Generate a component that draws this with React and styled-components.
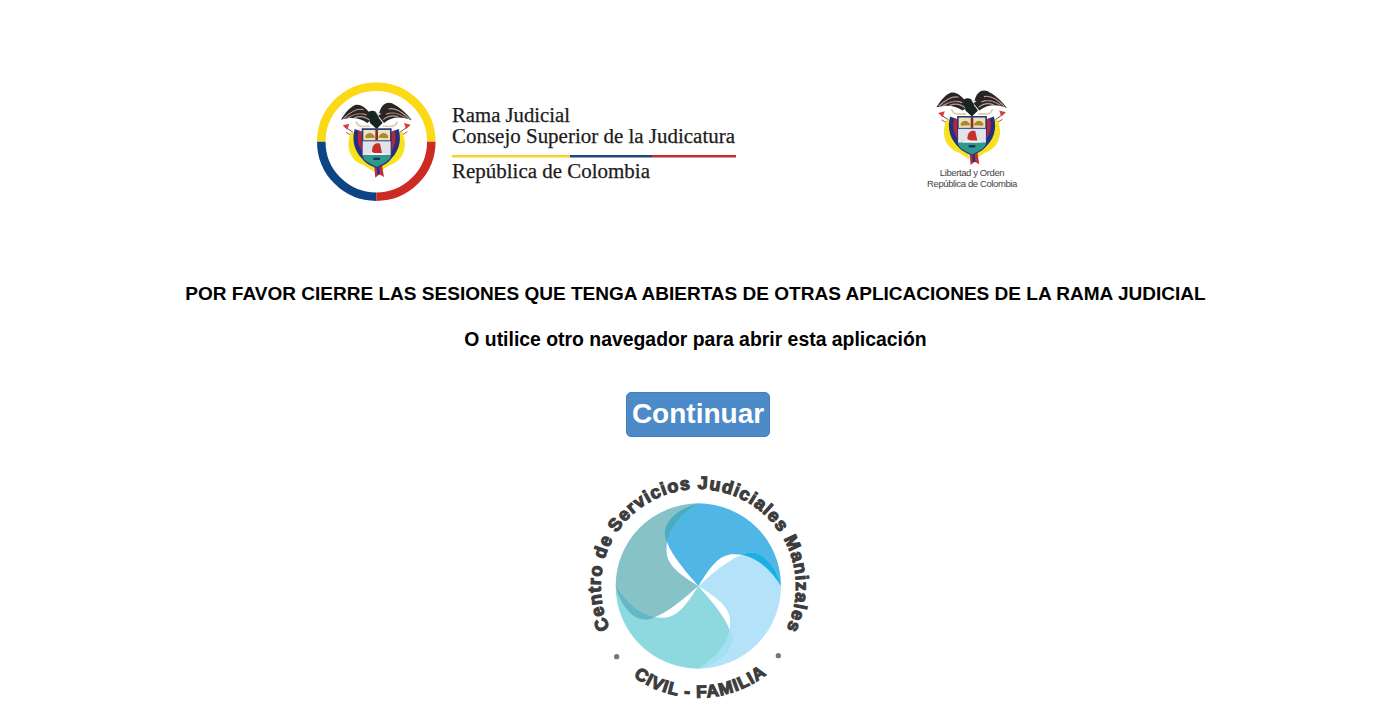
import styled, { createGlobalStyle } from "styled-components"

const colors = {
  yellow: "#fbd915",
  blue: "#0d4485",
  red: "#cc2a22",
  ink: "#3d3d3d",
}

const GlobalStyle = createGlobalStyle`
  html, body {
    margin: 0;
    padding: 0;
    background: #fff;
    font-family: "Liberation Sans", Arial, sans-serif;
  }
`

const Page = styled.div`
  display: flex;
  flex-direction: column;
  align-items: center;
  height: 722px;
  overflow: hidden;
  padding: 80px 0 0 8px;
  box-sizing: border-box;
`

const LogoRow = styled.div`
  align-self: flex-start;
  display: flex;
  align-items: flex-start;
  gap: 190px;
  padding-left: 309px;
`

const RamaLogo = styled.svg`
  display: block;
  width: 420px;
  height: 124px;
`

const RamaText = styled.text`
  font-family: "Liberation Serif", "Times New Roman", serif;
  font-size: 20.5px;
  fill: #1c1c1c;
  stroke: #1c1c1c;
  stroke-width: 0.25px;
`

const SealBlock = styled.div`
  display: flex;
  flex-direction: column;
  align-items: center;
  width: 90px;
  padding-top: 9px;
`

const SealImage = styled.svg`
  display: block;
  width: 74px;
  height: 78px;
`

const SealCaption = styled.div`
  font-size: 9.5px;
  line-height: 11px;
  letter-spacing: -0.4px;
  color: #444;
  text-align: center;
  white-space: nowrap;
`

const Notice = styled.h3`
  margin: ${(p) => p.$top}px 0 0;
  font-size: ${(p) => p.$size}px;
  line-height: 20px;
  font-weight: bold;
  color: #000;
  text-align: center;
  white-space: nowrap;
`

const ContinueButton = styled.button`
  margin: 43px 0 0 5px;
  width: 144px;
  height: 45px;
  padding: 0 0 2px;
  border: 1px solid #3f80bd;
  border-radius: 5px;
  background: #4c8bc8;
  color: #fff;
  font-family: inherit;
  font-size: 28px;
  font-weight: bold;
  cursor: pointer;
`

const CentroLogo = styled.svg`
  display: block;
  flex: none;
  margin: 28px 0 0 -1px;
  width: 240px;
  height: 245px;
`

const CircleText = styled.text`
  font-family: "Liberation Sans", Arial, sans-serif;
  font-weight: bold;
  font-size: ${(p) => p.$size}px;
  fill: ${colors.ink};
  stroke: ${colors.ink};
  stroke-width: 3.5px;
`

// viewBox is 90..310 x 85..320, drawn a bit by eye from the crest
const Crest = () => (
  <g>
    {/* spears */}
    <path d="M102,160 L155,195 M298,158 L245,195" stroke="#5a5a5a" strokeWidth="3" fill="none" />
    <path d="M98,157 L118,152 L112,170Z M302,155 L282,150 L288,168Z" fill="#d8413a" />
    <path d="M108,178 L140,196 M292,176 L260,196" stroke="#d8413a" strokeWidth="3" />

    {/* flags and their yellow tails */}
    <path d="M124,176 C106,214 116,262 160,276 C172,282 182,292 192,296 L186,262 L158,180Z" fill="#f6e21f" />
    <path d="M276,176 C294,214 284,262 240,276 C228,282 218,292 208,296 L214,262 L242,180Z" fill="#f6e21f" />
    <path d="M134,168 C124,206 134,240 166,266 L176,244 L156,176Z" fill="#22307f" />
    <path d="M266,168 C276,206 266,240 234,266 L224,244 L244,176Z" fill="#22307f" />
    <path d="M146,172 C138,205 148,232 172,252 L172,225 L156,178Z" fill="#b3263d" />
    <path d="M254,172 C262,205 252,232 228,252 L228,225 L244,178Z" fill="#b3263d" />

    {/* ribbon under the shield */}
    <path d="M192,278 L216,276 L222,312 L208,304 L196,314Z" fill="#c32f35" />
    <path d="M200,280 L208,280 L210,304 L202,306Z" fill="#26357f" />

    {/* wings */}
    <path d="M190,136 C176,110 152,90 134,97 C118,104 104,122 93,140 C124,131 150,135 172,150Z" fill="#2a2424" />
    <path d="M206,130 C210,98 226,84 246,91 C266,101 292,122 305,142 C276,130 246,130 222,150Z" fill="#2a2424" />
    <path d="M100,137 C120,118 140,104 160,110 M112,136 C130,124 150,118 170,126 M132,135 C148,128 165,130 180,142" stroke="#b6a39b" strokeWidth="3.5" fill="none" />
    <path d="M298,138 C278,118 258,102 236,108 M286,134 C268,122 246,116 228,124 M266,133 C250,126 234,128 220,140" stroke="#b6a39b" strokeWidth="3.5" fill="none" />
    <path d="M108,134 C126,126 142,120 156,122 M290,134 C272,124 256,120 242,120" stroke="#8a3f3f" strokeWidth="2" fill="none" />

    {/* body */}
    <path d="M176,116 C192,108 206,118 206,134 L218,150 L200,168 L180,150Z" fill="#17241f" />
    <path d="M196,116 L214,122 L204,128Z" fill="#d9e2e0" />

    {/* laurel */}
    <path d="M138,146 C146,168 168,158 182,160 M262,146 C254,168 232,158 218,160" stroke="#d9ceaa" strokeWidth="5" fill="none" />

    {/* shield */}
    <path d="M155,166 L245,166 L245,245 C245,268 220,276 200,286 C180,276 155,268 155,245Z" fill="#2b3a7c" />
    <rect x="160" y="171" width="80" height="31" fill="#efe3b8" />
    <path d="M166,188 C174,176 190,178 195,194 L166,196Z M234,188 C226,176 210,178 205,194 L234,196Z" fill="#a68a36" />
    <rect x="196" y="170" width="8" height="32" fill="#8a2c2c" />
    <rect x="158" y="205" width="84" height="42" fill="#dfe4ea" />
    <path d="M186,236 C186,214 198,208 210,212 L216,240 L200,244Z" fill="#c8302c" />
    <path d="M158,247 L242,247 C242,264 218,272 200,282 C182,272 158,264 158,247Z" fill="#2f9a8c" />
    <path d="M170,246 C186,238 214,238 230,246Z" fill="#f4f7f5" />
    <rect x="190" y="254" width="20" height="7" fill="#14365c" />
  </g>
)

const PETAL = "M0,0 C-35,-40 -80,-90 -95,-135 C-118,-185 -65,-232 0,-248 A248,248 0 0 1 248,0 C220,-45 170,-100 100,-95 C55,-92 25,-38 0,0Z"

const petals = [
  { angle: 0, fill: "#50b6e6", overlap: "#4aacc0" },
  { angle: 90, fill: "#b4e3f9", overlap: "#1ab0e6" },
  { angle: 180, fill: "#8ed9e0", overlap: "#a5dff2" },
  { angle: 270, fill: "#88c2c9", overlap: "#62b8c4" },
]

function App() {
  return (
    <Page>
      <GlobalStyle />
      <LogoRow>
        <RamaLogo viewBox="0 0 420 124">
          <g fill="none" strokeWidth="8.5">
            <path d="M4.3,61.7 A55,55 0 0 1 114.3,61.7" stroke={colors.yellow} />
            <path d="M4.3,61.7 A55,55 0 0 0 59.3,116.7" stroke={colors.blue} />
            <path d="M59.3,116.7 A55,55 0 0 0 114.3,61.7" stroke={colors.red} />
          </g>
          <g transform="translate(23,21.3) scale(0.3333) translate(-90,-85)">
            <Crest />
          </g>
          <RamaText x="135" y="41.5" textLength="118" lengthAdjust="spacingAndGlyphs">Rama Judicial</RamaText>
          <RamaText x="135" y="62.5" textLength="283" lengthAdjust="spacingAndGlyphs">Consejo Superior de la Judicatura</RamaText>
          <rect x="135" y="75" width="118" height="2.5" fill="#f5d327" />
          <rect x="253" y="75" width="82" height="2.5" fill="#1c4a80" />
          <rect x="335" y="75" width="84" height="2.5" fill="#b8352f" />
          <RamaText x="135" y="98" textLength="198" lengthAdjust="spacingAndGlyphs">República de Colombia</RamaText>
        </RamaLogo>
        <SealBlock>
          <SealImage viewBox="90 85 220 235">
            <Crest />
          </SealImage>
          <SealCaption>
            Libertad y Orden
            <br />
            República de Colombia
          </SealCaption>
        </SealBlock>
      </LogoRow>

      <Notice $top={80} $size={19.05}>POR FAVOR CIERRE LAS SESIONES QUE TENGA ABIERTAS DE OTRAS APLICACIONES DE LA RAMA JUDICIAL</Notice>
      <Notice $top={25} $size={19.4}>O utilice otro navegador para abrir esta aplicación</Notice>

      <ContinueButton>Continuar</ContinueButton>

      <CentroLogo viewBox="0 0 720 735">
        <defs>
          <clipPath id="prevPetal">
            <path d={PETAL} transform="rotate(-90)" />
          </clipPath>
          <path id="outerArc" d="M105,490 A293,293 0 1 1 635,490" />
          <path id="innerArc" d="M175,635 A335,335 0 0 0 575,628" />
        </defs>
        <g transform="translate(370,363)">
          {petals.map((p) => (
            <path key={p.angle} d={PETAL} fill={p.fill} transform={`rotate(${p.angle})`} />
          ))}
          {petals.map((p) => (
            <g key={p.angle} transform={`rotate(${p.angle})`}>
              <path d={PETAL} fill={p.overlap} clipPath="url(#prevPetal)" />
            </g>
          ))}
        </g>
        <CircleText $size={54}>
          <textPath href="#outerArc" textLength="1180" lengthAdjust="spacing">Centro de Servicios Judiciales Manizales</textPath>
        </CircleText>
        <CircleText $size={52}>
          <textPath href="#innerArc" textLength="428" lengthAdjust="spacing">CIVIL - FAMILIA</textPath>
        </CircleText>
        <circle cx="125" cy="575" r="8" fill="#777" />
        <circle cx="610" cy="572" r="8" fill="#777" />
      </CentroLogo>
    </Page>
  )
}

export default App
